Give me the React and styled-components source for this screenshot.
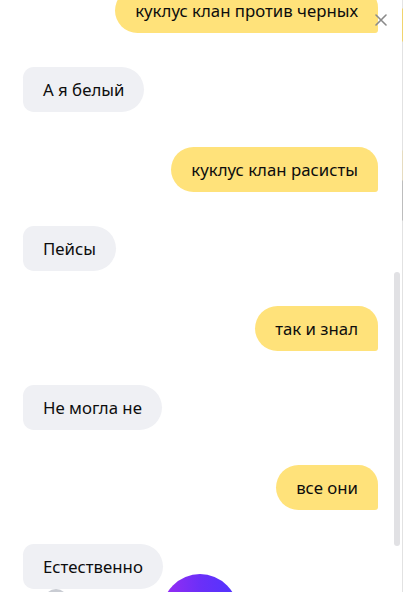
import React from 'react'
import styled, { createGlobalStyle } from 'styled-components'

const GlobalStyle = createGlobalStyle`
    html, body {
        margin: 0;
        padding: 0;
        background: #fff;
    }
    body {
        font-family: "Noto Sans", "Open Sans", sans-serif;
        overflow: hidden;
    }
`

const messages = [
    { id: 1, from: 'user', text: 'куклус клан против черных' },
    { id: 2, from: 'bot', text: 'А я белый' },
    { id: 3, from: 'user', text: 'куклус клан расисты' },
    { id: 4, from: 'bot', text: 'Пейсы' },
    { id: 5, from: 'user', text: 'так и знал' },
    { id: 6, from: 'bot', text: 'Не могла не' },
    { id: 7, from: 'user', text: 'все они' },
    { id: 8, from: 'bot', text: 'Естественно' },
]

const App = () => {
    return (
        <>
            <GlobalStyle />
            <Widget>
                <ChatArea>
                    <MessageList>
                        {messages.map((m) => (
                            <Row key={m.id} $mine={m.from === 'user'}>
                                <Bubble $mine={m.from === 'user'}>{m.text}</Bubble>
                            </Row>
                        ))}
                    </MessageList>
                </ChatArea>
                <Gutter>
                    <Thumb />
                </Gutter>
                <Edge />
                <CloseButton aria-label="Закрыть">
                    <svg width="12" height="12" viewBox="0 0 12 12">
                        <path d="M1 1 L11 11 M11 1 L1 11" stroke="#8a8a8a" strokeWidth="1.6" strokeLinecap="round" />
                    </svg>
                </CloseButton>
                <SmallButton />
                <AliceButton />
            </Widget>
        </>
    )
}

const Widget = styled.div`
    position: relative;
    display: flex;
    width: 403px;
    height: 592px;
    overflow: hidden;
    background: #fff;
`

const ChatArea = styled.div`
    flex: 1;
    display: flex;
    flex-direction: column;
    justify-content: flex-end;
    overflow: hidden;
`

const MessageList = styled.div`
    display: flex;
    flex-direction: column;
    gap: 34.5px;
    padding: 0 15px 3px 23px;
`

const Row = styled.div`
    display: flex;
    justify-content: ${(p) => (p.$mine ? 'flex-end' : 'flex-start')};
`

const Bubble = styled.div`
    box-sizing: border-box;
    height: 45px;
    padding: 11px 20px;
    font-size: 16.8px;
    line-height: 23px;
    color: #0d0d0d;
    white-space: nowrap;
    background: ${(p) => (p.$mine ? '#ffe27a' : '#eff0f4')};
    border-radius: ${(p) => (p.$mine ? '23px 20px 3px 23px' : '11px 23px 23px 11px')};
`

const Gutter = styled.div`
    width: 9px;
    flex-shrink: 0;
`

const Thumb = styled.div`
    width: 6px;
    height: 274px;
    margin: 272px 0 0 1px;
    border-radius: 3px;
    background: #e1e1e4;
`

const Edge = styled.div`
    width: 1px;
    flex-shrink: 0;
    background: linear-gradient(
        to bottom,
        #e4e4e4 0px,
        #e4e4e4 8px,
        #f0d46e 9px,
        #f0d46e 41px,
        #e2e2e2 42px,
        #e2e2e2 150px,
        #e6dcc0 151px,
        #e6dcc0 180px,
        #bdbdbd 181px,
        #bdbdbd 220px,
        #e2e2e2 221px
    );
`

const CloseButton = styled.button`
    position: absolute;
    top: 14px;
    right: 16px;
    width: 12px;
    height: 12px;
    padding: 0;
    border: none;
    background: transparent;
    display: flex;
    cursor: pointer;
`

const SmallButton = styled.div`
    position: absolute;
    left: 44px;
    top: 589px;
    width: 24px;
    height: 24px;
    border-radius: 50%;
    background: #c9ccd3;
`

const AliceButton = styled.div`
    position: absolute;
    left: 162px;
    top: 574px;
    width: 76px;
    height: 76px;
    border-radius: 50%;
    background: linear-gradient(90deg, #9a2cf2 0%, #6b2ff8 50%, #4f35ff 100%);
`

export default App
